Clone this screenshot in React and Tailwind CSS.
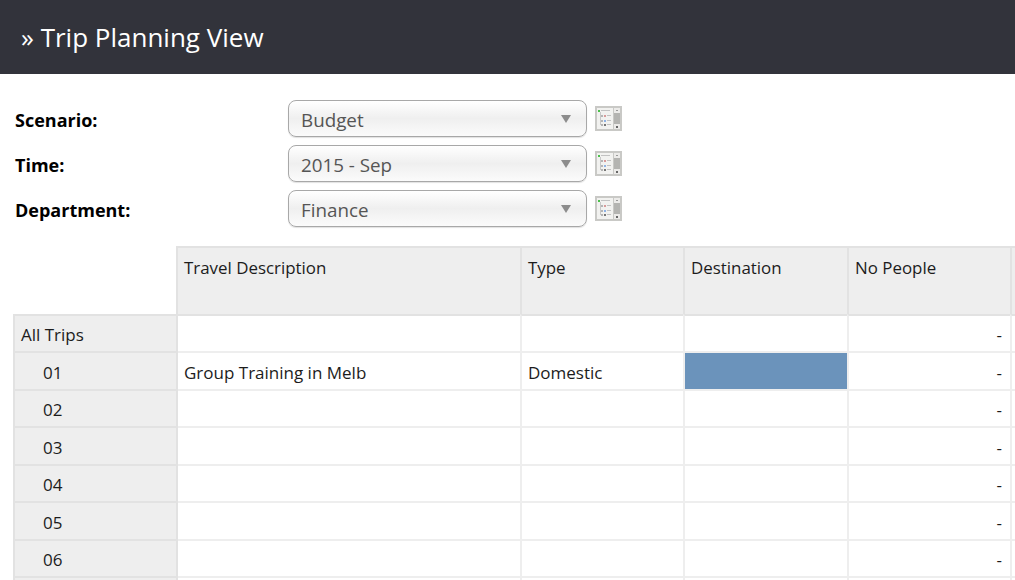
import React from "react";

const filters = [
  { label: "Scenario:", value: "Budget" },
  { label: "Time:", value: "2015 - Sep" },
  { label: "Department:", value: "Finance" },
];

const rows = ["01", "02", "03", "04", "05", "06"];

const gridCols = "grid grid-cols-[13px_163px_344px_163px_164px_163px_5px]";

// small "member list" picture next to each dropdown
const ListIcon = () => (
  <svg width="27" height="25" viewBox="0 0 27 25" className="ml-[8px] shrink-0">
    <rect x="0" y="0" width="27" height="25" fill="#c9c9c6" />
    <rect x="2" y="2" width="16" height="21" fill="#f2f2f0" />
    <rect x="19" y="2" width="6" height="21" fill="#b4b4b1" />
    <rect x="19" y="2" width="6" height="5" fill="#ecebe9" />
    <rect x="19" y="18" width="6" height="5" fill="#ecebe9" />
    <rect x="21" y="4" width="2" height="1" fill="#9a9a9a" />
    <rect x="21" y="20" width="2" height="2" fill="#666666" />
    <rect x="3" y="4" width="2" height="2" fill="#4cc04c" />
    <rect x="6" y="4" width="9" height="1" fill="#c2c2c2" />
    <rect x="5" y="6" width="1" height="13" fill="#c8c8c8" />
    <rect x="6" y="9" width="2" height="2" fill="#b5b5b5" />
    <rect x="9" y="9" width="2" height="2" fill="#d99a9a" />
    <rect x="12" y="9" width="4" height="1" fill="#c2c2c2" />
    <rect x="6" y="14" width="2" height="2" fill="#b5b5b5" />
    <rect x="9" y="14" width="2" height="2" fill="#8fb3e6" />
    <rect x="12" y="14" width="4" height="1" fill="#c2c2c2" />
    <rect x="6" y="18" width="2" height="2" fill="#b5b5b5" />
    <rect x="9" y="18" width="2" height="2" fill="#777777" />
    <rect x="12" y="18" width="4" height="1" fill="#c2c2c2" />
  </svg>
);

const HeadCell = ({ children }) => (
  <div className="bg-[#eeeeee] border-t-2 border-l-2 border-[#e2e2e2] pl-[6px] pt-[8px] text-[16.9px] leading-[24px]">
    {children}
  </div>
);

const Row = ({ label, indent, desc, type, highlight, first, dash = "-" }) => {
  const topLine = first ? "border-t-[#e2e2e2]" : "border-t-[#eeeeee]";
  return (
    <div className={`${gridCols} h-[37.5px] text-[17px]`}>
      <div />
      <div className={`bg-[#eeeeee] border-x-2 border-t-2 border-[#e2e2e2] mr-[-2px] pt-[3px] flex items-center ${indent ? "pl-[28px]" : "pl-[6px]"}`}>
        {label}
      </div>
      <div className={`border-t-2 ${topLine} ml-[2px] pl-[6px] pt-[3px] flex items-center`}>{desc}</div>
      <div className={`border-l-2 border-l-[#eeeeee] border-t-2 ${topLine} pl-[6px] pt-[3px] flex items-center`}>{type}</div>
      <div className={`border-l-2 border-l-[#eeeeee] border-t-2 ${topLine} ${highlight ? "bg-[#6b93bb]" : ""}`} />
      <div className={`border-l-2 border-l-[#eeeeee] border-t-2 ${topLine} pr-[8px] pt-[3px] flex items-center justify-end`}>{dash}</div>
      <div className={`border-l-2 border-l-[#eeeeee] border-t-2 ${topLine}`} />
    </div>
  );
};

export default function App() {
  return (
    <div
      className="w-[1015px] h-[580px] overflow-hidden bg-white text-[#1c1c1c]"
      style={{ fontFamily: '"Open Sans", "Noto Sans", sans-serif' }}
    >
      {/* Page title */}
      <div className="h-[74px] bg-[#32333b] flex items-center pl-[21px] text-white text-[26px]">
        » Trip Planning View
      </div>

      {/* Filters */}
      <div className="pt-[26px] flex flex-col gap-[8px]">
        {filters.map((f) => (
          <div key={f.label} className="flex items-center h-[37px]">
            <div className="w-[288px] pl-[15px] pt-[3px] font-bold text-[18px] text-black">{f.label}</div>
            <div className="w-[299px] h-[37px] rounded-[8px] border border-[#a8a8a8] bg-gradient-to-b from-[#ffffff] via-[#efefef] to-[#fbfbfb] flex items-center justify-between pl-[12px] pr-[15px] text-[18.8px] text-[#555555] shadow-[0_1px_1px_rgba(0,0,0,0.12)]">
              <span className="pt-[4px]">{f.value}</span>
              <span className="w-0 h-0 border-x-[5px] border-x-transparent border-t-[8px] border-t-[#8c8c8c]" />
            </div>
            <ListIcon />
          </div>
        ))}
      </div>

      {/* Table */}
      <div className="mt-[19px]">
        <div className={`${gridCols} h-[67.75px]`}>
          <div />
          <div />
          <HeadCell>Travel Description</HeadCell>
          <HeadCell>Type</HeadCell>
          <HeadCell>Destination</HeadCell>
          <HeadCell>No People</HeadCell>
          <HeadCell />
        </div>
        <Row label="All Trips" first />
        {rows.map((r, i) => (
          <Row
            key={r}
            label={r}
            indent
            desc={i === 0 ? "Group Training in Melb" : ""}
            type={i === 0 ? "Domestic" : ""}
            highlight={i === 0}
          />
        ))}
        {/* next row only shows its top line at the fold */}
        <Row label="" dash="" />
      </div>
    </div>
  );
}
